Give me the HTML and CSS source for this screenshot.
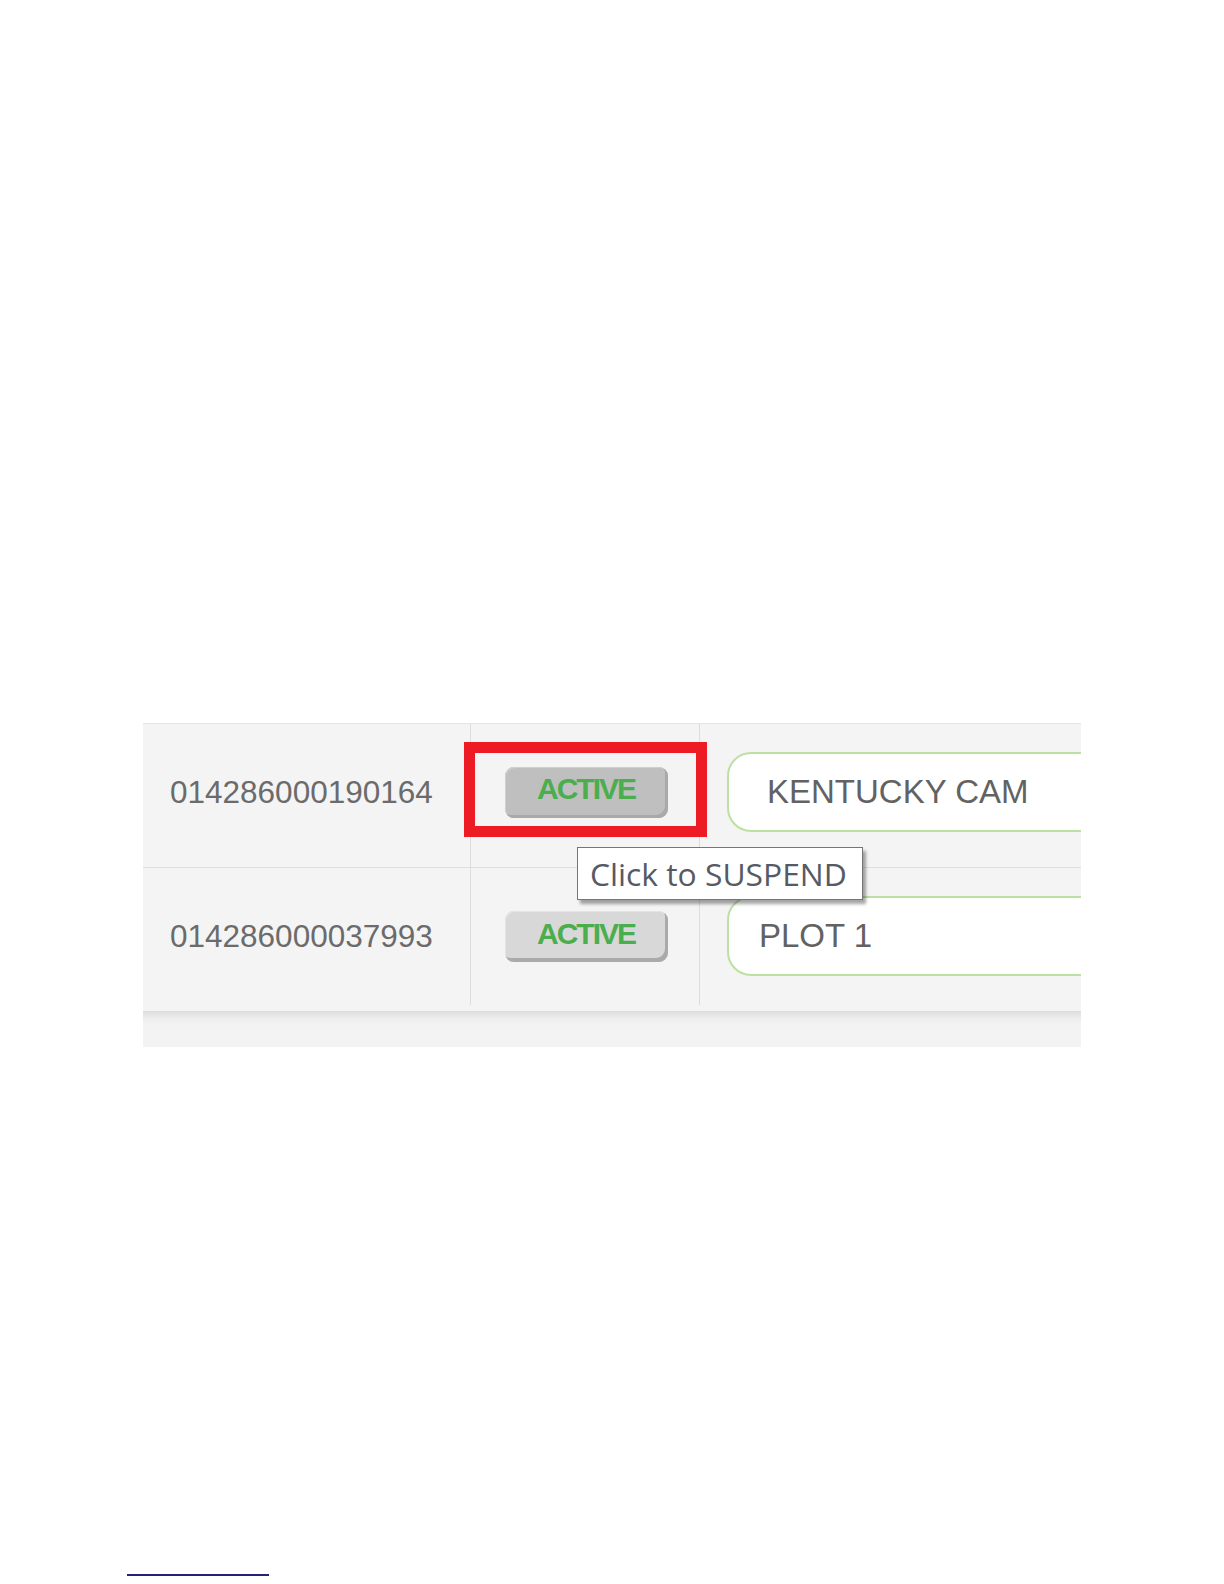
FILE: index.html
```html
<!DOCTYPE html>
<html lang="en">
<head>
<meta charset="utf-8">
<title>Status</title>
<link rel="stylesheet" href="styles.css">
</head>
<body>
<div class="doc">
  <div class="grid">
    <div class="row row-first">
      <div class="cell cell-id">014286000190164</div>
      <div class="cell cell-status"><div class="btn btn-hover">ACTIVE</div></div>
      <div class="cell cell-name"><div class="field field-a">KENTUCKY CAM</div></div>
    </div>
    <div class="row row-last">
      <div class="cell cell-id">014286000037993</div>
      <div class="cell cell-status"><div class="btn">ACTIVE</div></div>
      <div class="cell cell-name"><div class="field field-b">PLOT 1</div></div>
    </div>
    <div class="foot"></div>
    <div class="highlight"></div>
    <div class="tooltip">Click to SUSPEND</div>
  </div>
  <div class="rule"></div>
</div>
</body>
</html>
```

FILE: styles.css
```css
html, body {
  margin: 0;
  padding: 0;
  background: #ffffff;
}

.doc {
  padding-top: 723px;
}

.grid {
  position: relative;
  margin-left: 143px;
  width: 938px;
}

.row {
  display: grid;
  grid-template-columns: 327px 229px 382px;
  height: 144px;
  box-sizing: border-box;
  border-top: 1px solid #dedede;
  background: #f4f4f4;
  overflow: hidden;
}

.row-first {
  border-top-color: #e6e6e6;
}

.cell {
  display: flex;
  align-items: center;
  box-sizing: border-box;
  padding-bottom: 7px;
  overflow: hidden;
}

.row-last .cell {
  align-self: start;
  height: 137px;
  padding-bottom: 1px;
}

.cell-id {
  padding-left: 27px;
  font-family: "Liberation Sans", Arial, sans-serif;
  font-size: 31.5px;
  color: #6b6b6b;
}

.cell-status {
  justify-content: center;
  border-left: 1px solid #dddddd;
  padding-left: 2px;
}

.cell-name {
  border-left: 1px solid #dddddd;
  padding-left: 27px;
}

.btn {
  width: 163px;
  height: 51px;
  box-sizing: border-box;
  border-radius: 9px;
  background: #d8d8d8;
  box-shadow: inset -3px -4px 0 #aaaaaa, inset 1px 1px 0 #e4e4e4;
  display: flex;
  align-items: center;
  justify-content: center;
  padding-bottom: 4px;
  font-family: "Liberation Sans", Arial, sans-serif;
  font-weight: bold;
  font-size: 30px;
  letter-spacing: -2px;
  color: #4aae4e;
}

.btn-hover {
  background: #bfbfbf;
  box-shadow: inset -3px -3px 0 #a9a9a9, inset 1px 1px 0 #cfcfcf;
  padding-bottom: 6px;
}

.field {
  width: 440px;
  height: 80px;
  flex: none;
  box-sizing: border-box;
  border: 2px solid #bcdfa4;
  border-radius: 24px;
  background: #ffffff;
  display: flex;
  align-items: center;
  font-family: "Liberation Sans", Arial, sans-serif;
  font-size: 33px;
  color: #626262;
}

.field-a {
  padding-left: 38px;
}

.field-b {
  padding-left: 30px;
}

.foot {
  height: 35px;
  border-top: 1px solid #dcdcdc;
  background: linear-gradient(to bottom, #e0e0e0 0, #eeeeee 7px, #f3f3f3 14px, #f3f3f3 100%);
}

.highlight {
  position: absolute;
  left: 321px;
  top: 19px;
  width: 243px;
  height: 95px;
  box-sizing: border-box;
  border: 11px solid #ed1c24;
}

.tooltip {
  position: absolute;
  left: 434px;
  top: 124px;
  width: 286px;
  height: 53px;
  box-sizing: border-box;
  border: 1px solid #767676;
  background: #ffffff;
  box-shadow: 3px 4px 3px rgba(0, 0, 0, 0.35);
  padding-left: 12px;
  font-family: "Open Sans", "Noto Sans", sans-serif;
  font-size: 31.8px;
  line-height: 51px;
  color: #565a66;
  white-space: nowrap;
}

.rule {
  margin-top: 527px;
  margin-left: 127px;
  width: 142px;
  height: 2px;
  background: #23237c;
}
```
